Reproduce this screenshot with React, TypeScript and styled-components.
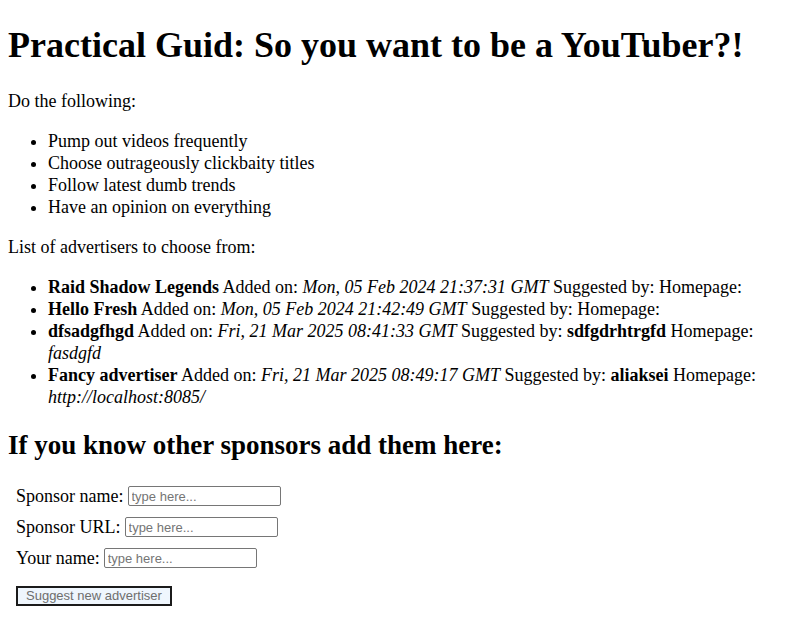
import React from "react";
import styled, { createGlobalStyle } from "styled-components";

const Global = createGlobalStyle`
  html, body { background: #fff; }
  body {
    margin: 8px;
    font-family: "Liberation Serif", "Times New Roman", serif;
    font-size: 18px;
    line-height: 22px;
    color: #000;
  }
`;

const Title = styled.h1`
  font-size: 36px;
  line-height: normal;
  font-weight: bold;
  margin: 16px 0 24px;
`;

const SubTitle = styled.h2`
  font-size: 27px;
  line-height: normal;
  font-weight: bold;
  margin: 22px 0 24px;
`;

const Para = styled.p`
  margin: 18px 0;
`;

const List = styled.ul`
  margin: 18px 0;
  padding-left: 40px;
  list-style: disc;
`;

const Item = styled.li``;

const Form = styled.form`
  padding: 0 8px;
  display: flex;
  flex-direction: column;
  align-items: flex-start;
  gap: 9px;
`;

const Row = styled.div`
  display: flex;
  align-items: center;
  gap: 4px;
`;

const Label = styled.label``;

const Input = styled.input`
  width: 153px;
  height: 20px;
  box-sizing: border-box;
  border: 1px solid #767676;
  border-radius: 2px;
  padding: 1px 3px;
  font-family: "Liberation Sans", Arial, sans-serif;
  font-size: 13px;
  color: #000;
  background: #fff;
  &::placeholder { color: #757575; }
`;

const Button = styled.button`
  margin-top: 8px;
  height: 20px;
  box-sizing: border-box;
  padding: 0 8px;
  border: 2px solid #1b1b1b;
  border-radius: 0;
  background: #eff6fd;
  color: #6e6e6e;
  font-family: "Liberation Sans", Arial, sans-serif;
  font-size: 13px;
  line-height: 14px;
`;

type Adv = { name: string; date: string; by?: string; url?: string };

const advertisers: Adv[] = [
  { name: "Raid Shadow Legends", date: "Mon, 05 Feb 2024 21:37:31 GMT" },
  { name: "Hello Fresh", date: "Mon, 05 Feb 2024 21:42:49 GMT" },
  { name: "dfsadgfhgd", date: "Fri, 21 Mar 2025 08:41:33 GMT", by: "sdfgdrhtrgfd", url: "fasdgfd" },
  { name: "Fancy advertiser", date: "Fri, 21 Mar 2025 08:49:17 GMT", by: "aliaksei", url: "http://localhost:8085/" },
];

const fields = ["Sponsor name:", "Sponsor URL:", "Your name:"];

export default function App() {
  return (
    <>
      <Global />
      <Title>Practical Guid: So you want to be a YouTuber?!</Title>
      <Para>Do the following:</Para>
      <List>
        <Item>Pump out videos frequently</Item>
        <Item>Choose outrageously clickbaity titles</Item>
        <Item>Follow latest dumb trends</Item>
        <Item>Have an opinion on everything</Item>
      </List>
      <Para>List of advertisers to choose from:</Para>
      <List>
        {advertisers.map((a) => (
          <Item key={a.name}>
            <b>{a.name}</b> Added on: <i>{a.date}</i> Suggested by:{" "}
            {a.by && <b>{a.by}</b>} Homepage: {a.url && <i>{a.url}</i>}
          </Item>
        ))}
      </List>
      <SubTitle>If you know other sponsors add them here:</SubTitle>
      <Form onSubmit={(e) => e.preventDefault()}>
        {fields.map((f) => (
          <Row key={f}>
            <Label>{f}</Label>
            <Input placeholder="type here..." />
          </Row>
        ))}
        <Button type="submit">Suggest new advertiser</Button>
      </Form>
    </>
  );
}
